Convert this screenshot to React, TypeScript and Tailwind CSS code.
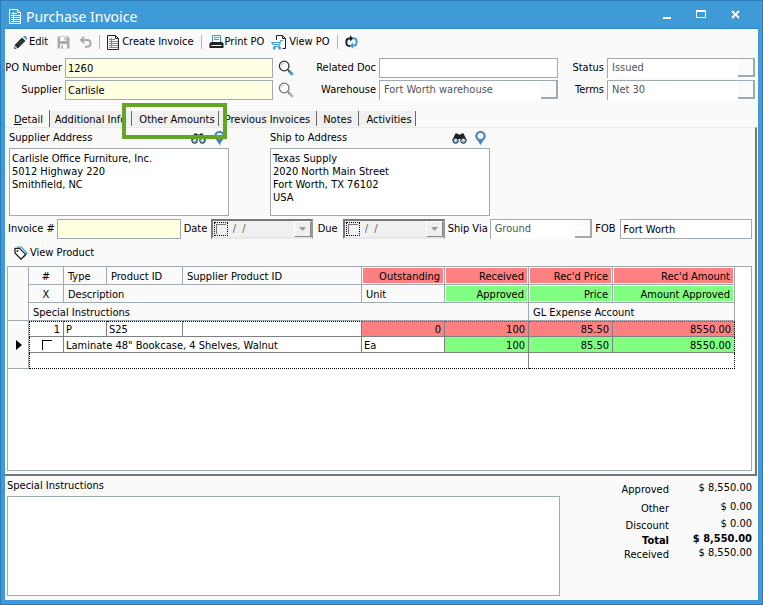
import React, { useState } from 'react';

const tabs = [
  { name: 'Detail', width: 'w-[44px] pl-0.5' },
  { name: 'Additional Info', width: 'w-[82px]' },
  { name: 'Other Amounts', width: 'w-[87px] pl-1' },
  { name: 'Previous Invoices', width: 'w-[98px]' },
  { name: 'Notes', width: 'w-[42px]' },
  { name: 'Activities', width: 'w-[57px] pl-1' },
];

const totals = [
  { label: 'Approved', value: '$ 8,550.00', row: 'h-5' },
  { label: 'Other', value: '$ 0.00', row: 'h-[18px]' },
  { label: 'Discount', value: '$ 0.00', row: 'h-4' },
  { label: 'Total', value: '$ 8,550.00', row: 'h-[14px] font-bold' },
  { label: 'Received', value: '$ 8,550.00', row: 'h-[14px]' },
];

const ListIcon = ({ paper, ink }: { paper: string; ink: string }) => (
  <svg width="13" height="15" viewBox="0 0 13 15" fill="none" aria-hidden="true">
    <path d="M2 4.5h6M2 6.5h9M2 8.5h9M2 10.5h9M2 12.5h9M4.5 3v10" stroke={ink} />
    <path d="M.5.5h8l3 3v11H.5z" stroke={paper} />
    <path d="M8.5.5v3h3" stroke={paper} />
  </svg>
);

const PencilIcon = () => (
  <svg width="15" height="15" viewBox="0 0 15 15" aria-hidden="true">
    <path d="M1 14l1.2-4.6L9 2.6 12.4 6l-6.8 6.8z" fill="#222" />
    <path d="M2.6 10.8l1.6 1.6L2 13z" fill="#fff" />
    <path d="M4.5 9.6l5-5M6 11l5-5" stroke="#777" strokeWidth=".6" />
    <path d="M10 1.6c1-1 2-1 3 0l.6.6c.8.9.8 1.8-.2 2.8z" fill="#3f9bd7" />
    <path d="M11 3.2l1 1" stroke="#fff" />
  </svg>
);

const SaveIcon = () => (
  <svg width="13" height="13" viewBox="0 0 13 13" aria-hidden="true">
    <path d="M.5.5h10.6l1.4 1.4v10.6H.5z" fill="#aaa" />
    <path d="M3 1h6.5v4H3zM3 8h7v4.5H3z" fill="#fbfbfb" />
    <path d="M7.4 1.4h1.2v2.8H7.4zM4.4 9.2h1.6v3.3H4.4z" fill="#aaa" />
  </svg>
);

const UndoIcon = () => (
  <svg width="13" height="12" viewBox="0 0 13 12" fill="none" stroke="#aaa" aria-hidden="true">
    <path d="M2 4h6c2.6 0 3.6 1.4 3.6 3.3S10.3 10.8 7.6 10.8H6" strokeWidth="2" />
    <path d="M5.2.8L1.8 4l3.4 3.2" strokeWidth="1.8" />
  </svg>
);

const PrinterIcon = () => (
  <svg width="15" height="14" viewBox="0 0 15 14" aria-hidden="true">
    <path d="M3.5 7V.5h8V7" fill="#fff" stroke="#3f9bd7" />
    <path d="M5 2.5h5M5 4.5h5" stroke="#3f9bd7" />
    <path d="M2 7h11l1.5 1.5V13H.5V8.5z" fill="#222" />
    <path d="M2.5 10.5h10" stroke="#fff" />
  </svg>
);

const CartIcon = () => (
  <svg width="16" height="15" viewBox="0 0 16 15" fill="none" aria-hidden="true">
    <path d="M5.5 5V.5h6l3 3v10h-3" stroke="#222" />
    <path d="M11.5.5v3h3" stroke="#222" />
    <path d="M12 5.5H9.5l-1 6H3M.5 7.5h8.5M1.5 9.5h7" stroke="#3f9bd7" />
    <path d="M.5 7.5l2 2.5" stroke="#3f9bd7" />
    <path d="M2 12h2.4v2.4H2zM7.4 12h2.4v2.4H7.4z" fill="#3f9bd7" />
  </svg>
);

const RefreshIcon = () => (
  <svg width="13" height="14" viewBox="0 0 13 14" fill="none" aria-hidden="true">
    <path d="M5.2 11H4.4C2.4 11 1.4 9.8 1.4 8V6.6C1.4 4.6 2.4 3.4 4.4 3.4h.8" stroke="#222" strokeWidth="2" />
    <path d="M5 .2v6.4l3.4-3.2z" fill="#222" />
    <path d="M7.8 3.2h.8c2 0 3 1.200 3 3v1.200c0 2-1 3.200-3 3.200h-.8" stroke="#3f9bd7" strokeWidth="2" />
    <path d="M8 7.4v6.400l-3.400-3.200z" fill="#3f9bd7" />
  </svg>
);

const SearchIcon = ({ handle, ring }: { handle: string; ring: string }) => (
  <svg width="16" height="16" viewBox="0 0 16 16" fill="none" aria-hidden="true">
    <circle cx="6.2" cy="6" r="4.8" fill="#fff" stroke={ring} strokeWidth="1.3" />
    <path d="M3.6 5.6a2.6 2.6 0 012.2-2.2" stroke="#aaa" strokeWidth=".8" />
    <path d="M10 10l1.6 1.6" stroke={ring} strokeWidth="1.8" />
    <path d="M11.2 11.2l3.6 3.6" stroke={handle} strokeWidth="2.8" />
  </svg>
);

const BinocularsIcon = () => (
  <svg width="15" height="11" viewBox="0 0 15 11" aria-hidden="true">
    <path d="M3.4.4h2.4l.6 1h2.2l.6-1h2.4L14.6 7 13 10H9V6H6v4H2L.4 7z" fill="#222" />
    <circle cx="3.6" cy="7.6" r="2.7" fill="#8cc4ea" stroke="#222" />
    <circle cx="11.4" cy="7.6" r="2.7" fill="#8cc4ea" stroke="#222" />
    <path d="M2.4 8.2l2-2M10.2 8.2l2-2" stroke="#fff" />
  </svg>
);

const PinIcon = () => (
  <svg width="11" height="14" viewBox="0 0 11 14" aria-hidden="true">
    <path
      d="M5.5 0C2.4 0 .3 2.2.3 5c0 2 1 3.4 2.4 4.4L5.5 14l2.8-4.6C9.7 8.4 10.7 7 10.7 5c0-2.8-2.1-5-5.2-5z"
      fill="#4484c4"
    />
    <circle cx="5.5" cy="5" r="3" fill="#fff" />
  </svg>
);

const TagIcon = () => (
  <svg width="14" height="14" viewBox="0 0 14 14" fill="none" aria-hidden="true">
    <path d="M3 1h4.4L13 7.2l-4 4.4" stroke="#3f9bd7" strokeWidth="1.2" />
    <path d="M1 2.4h4.6l6 6L7 13.2 1 7z" fill="#fff" stroke="#222" strokeWidth="1.3" />
    <circle cx="3.4" cy="5" r="1" fill="#222" />
  </svg>
);

const Separator = () => <span className="h-[14px] w-px bg-[#b4b4b4]" />;

const DropDown = ({ id, value }: { id: string; value: string }) => (
  <div className="relative h-5 min-w-0 border-t border-l border-[#a0a8b0] bg-white">
    <select
      id={id}
      disabled
      defaultValue={value}
      className="block h-[17px] w-full appearance-none bg-transparent px-1 text-[#555] opacity-100"
    >
      <option>{value}</option>
    </select>
    <span className="pointer-events-none absolute top-0 right-0 flex h-[18px] w-[17px] items-center justify-center border-r-2 border-b-2 border-[#a0a8b0] bg-[#fafafa]">
      <svg width="7" height="4" viewBox="0 0 7 4" aria-hidden="true">
        <path d="M0 0h7L3.5 4z" fill="#fff" />
      </svg>
    </span>
  </div>
);

const DateBox = ({ id, label }: { id: string; label: string }) => (
  <div className="flex h-5 w-[102px] items-center border-2 border-t-[#777] border-r-[#999] border-b-[#e8e8e8] border-l-[#777] bg-[#f0f0f0] pl-px">
    <span className="flex size-[14px] items-center justify-center border border-dotted border-black">
      <input
        type="checkbox"
        aria-label={`Set ${label}`}
        className="size-[10px] appearance-none border-t border-l border-[#777]"
      />
    </span>
    <input
      id={id}
      type="text"
      defaultValue="/  /"
      className="min-w-0 flex-1 bg-transparent pl-[5px] whitespace-pre text-[#606060] outline-none"
    />
    <button
      type="button"
      aria-label={`Pick ${label}`}
      className="flex h-4 w-[17px] items-center justify-center border border-t-white border-r-[#888] border-b-[#888] border-l-white"
    >
      <svg width="7" height="4" viewBox="0 0 7 4" aria-hidden="true">
        <path d="M0 0h7L3.5 4z" fill="#999" />
      </svg>
    </button>
  </div>
);

const AddressBox = ({ id, label, value }: { id: string; label: string; value: string }) => (
  <div className="w-[220px]">
    <div className="flex h-5 items-center">
      <label htmlFor={id} className="flex-1">{label}</label>
      <button type="button" aria-label={`Find ${label}`} className="mr-2">
        <BinocularsIcon />
      </button>
      <button type="button" aria-label={`Map ${label}`} className="mr-1">
        <PinIcon />
      </button>
    </div>
    <textarea
      id={id}
      defaultValue={value}
      className="block h-[68px] w-full resize-none border border-[#a0a8b0] bg-white px-0.5 pt-[3px] leading-[13px] outline-none"
    />
  </div>
);

const headCell = 'h-[18px] border-r border-b border-[#a0a8b0] p-0 font-normal';
const headText = `${headCell} pt-0.5 pl-1`;
const bodyCell = 'h-4 border-r border-b border-[#808080] p-0 pt-px leading-[13px]';

const HeadFill = ({ color, children }: { color: string; children: React.ReactNode }) => (
  <div className={`mx-px h-[15px] pr-[3px] text-right leading-[17px] ${color}`}>{children}</div>
);

const ProductTable = () => (
  <table className="w-[727px] table-fixed border-separate border-spacing-0 text-left">
    <colgroup>
      <col className="w-[21px]" />
      <col className="w-[35px]" />
      <col className="w-[43px]" />
      <col className="w-[76px]" />
      <col className="w-[179px]" />
      <col className="w-[83px]" />
      <col className="w-[84px]" />
      <col className="w-[84px]" />
      <col className="w-[122px]" />
    </colgroup>
    <thead className="bg-[#fafafa]">
      <tr>
        <td rowSpan={3} className={headCell}></td>
        <th className={`${headCell} pt-0.5 text-center`}>#</th>
        <th className={headText}>Type</th>
        <th className={headText}>Product ID</th>
        <th className={headText}>Supplier Product ID</th>
        <th className={headCell}><HeadFill color="bg-[#ff8080]">Outstanding</HeadFill></th>
        <th className={headCell}><HeadFill color="bg-[#ff8080]">Received</HeadFill></th>
        <th className={headCell}><HeadFill color="bg-[#ff8080]">Rec'd Price</HeadFill></th>
        <th className={headCell}><HeadFill color="bg-[#ff8080]">Rec'd Amount</HeadFill></th>
      </tr>
      <tr>
        <th className={`${headCell} pt-0.5 text-center`}>X</th>
        <th colSpan={3} className={headText}>Description</th>
        <th className={headText}>Unit</th>
        <th className={headCell}><HeadFill color="bg-[#80ff80]">Approved</HeadFill></th>
        <th className={headCell}><HeadFill color="bg-[#80ff80]">Price</HeadFill></th>
        <th className={headCell}><HeadFill color="bg-[#80ff80]">Amount Approved</HeadFill></th>
      </tr>
      <tr>
        <th colSpan={6} className={headText}>Special Instructions</th>
        <th colSpan={2} className={headText}>GL Expense Account</th>
      </tr>
    </thead>
    <tbody className="bg-white">
      <tr>
        <td rowSpan={3} className="border-r border-b border-[#a0a8b0] bg-[#fafafa] p-0">
          <svg width="6" height="10" viewBox="0 0 6 10" className="ml-2" aria-hidden="true">
            <path d="M0 0l6 5-6 5z" fill="#000" />
          </svg>
        </td>
        <td className={`${bodyCell} border-t border-t-black border-l border-l-black pr-[3px] text-right [border-top-style:dotted] [border-left-style:dotted]`}>1</td>
        <td className={`${bodyCell} border-t border-t-black pl-0.5 [border-top-style:dotted]`}>P</td>
        <td className={`${bodyCell} border-t border-t-black pl-0.5 [border-top-style:dotted]`}>S25</td>
        <td className={`${bodyCell} border-t border-t-black [border-top-style:dotted]`}></td>
        <td className={`${bodyCell} border-t border-t-[#007f7f] bg-[#ff8080] pr-[3px] text-right [border-top-style:dotted]`}>0</td>
        <td className={`${bodyCell} border-t border-t-[#007f7f] bg-[#ff8080] pr-[3px] text-right [border-top-style:dotted]`}>100</td>
        <td className={`${bodyCell} border-t border-t-[#007f7f] bg-[#ff8080] pr-[3px] text-right [border-top-style:dotted]`}>85.50</td>
        <td className={`${bodyCell} border-t border-t-[#007f7f] border-r-black bg-[#ff8080] pr-[3px] text-right [border-top-style:dotted] [border-right-style:dotted]`}>8550.00</td>
      </tr>
      <tr>
        <td className={`${bodyCell} border-l border-l-black [border-left-style:dotted]`}>
          <input
            type="checkbox"
            aria-label="Close line"
            className="mx-auto block size-[10px] appearance-none border-t border-l border-black"
          />
        </td>
        <td colSpan={3} className={`${bodyCell} pl-0.5`}>Laminate 48" Bookcase, 4 Shelves, Walnut</td>
        <td className={`${bodyCell} pl-0.5`}>Ea</td>
        <td className={`${bodyCell} bg-[#80ff80] pr-[3px] text-right`}>100</td>
        <td className={`${bodyCell} bg-[#80ff80] pr-[3px] text-right`}>85.50</td>
        <td className={`${bodyCell} border-r-black bg-[#80ff80] pr-[3px] text-right [border-right-style:dotted]`}>8550.00</td>
      </tr>
      <tr>
        <td colSpan={6} className={`${bodyCell} border-b-black border-l border-l-black [border-bottom-style:dotted] [border-left-style:dotted]`}></td>
        <td colSpan={2} className={`${bodyCell} border-r-black border-b-black [border-right-style:dotted] [border-bottom-style:dotted]`}></td>
      </tr>
    </tbody>
  </table>
);

const App: React.FC = () => {
  const [activeTab, setActiveTab] = useState('Detail');

  return (
    <div className="flex min-h-screen flex-col border border-[#2b7cb8] bg-[#3f9bd7] px-1 pb-1 font-['DejaVu_Sans_Condensed','Noto_Sans',sans-serif] text-[11px] leading-[14px] text-black">
      {/* Title Bar */}
      <header className="flex h-7 items-center border-b border-[#2f87c4] pt-1 pr-[18px] pl-1 text-white">
        <ListIcon paper="#fff" ink="#fff" />
        <h1 className="ml-1 flex-1 font-['Noto_Sans',sans-serif] text-[14px] leading-5">Purchase Invoice</h1>
        <div className="flex gap-[25px] pb-1">
          <button type="button" aria-label="Minimize" className="flex w-2 items-end">
            <span className="h-0.5 w-2 bg-white" />
          </button>
          <button type="button" aria-label="Maximize" className="h-2 w-[10px] border border-t-2 border-white" />
          <button type="button" aria-label="Close">
            <svg width="9" height="9" viewBox="0 0 9 9" aria-hidden="true">
              <path d="M1 1l7 7M8 1L1 8" stroke="#fff" strokeWidth="1.8" />
            </svg>
          </button>
        </div>
      </header>

      <main className="flex flex-1 flex-col bg-[#fafafa]">
        {/* Toolbar */}
        <div className="flex h-[26px] items-center gap-[7px] pl-2">
          <button type="button" className="flex items-center gap-px"><PencilIcon />Edit</button>
          <button type="button" aria-label="Save" disabled className="pl-0.5"><SaveIcon /></button>
          <button type="button" aria-label="Undo" disabled className="pl-0.5"><UndoIcon /></button>
          <Separator />
          <button type="button" className="flex items-center gap-0.5"><ListIcon paper="#222" ink="#3f9bd7" />Create Invoice</button>
          <Separator />
          <button type="button" className="flex items-center gap-px"><PrinterIcon />Print PO</button>
          <button type="button" className="flex items-center gap-0.5"><CartIcon />View PO</button>
          <Separator />
          <button type="button" aria-label="Refresh"><RefreshIcon /></button>
        </div>

        {/* Order Fields */}
        <div className="grid grid-cols-[54px_minmax(0,208fr)_21px_76px_minmax(0,179fr)_43px_minmax(0,148fr)] items-center gap-x-[3px] gap-y-0.5 px-[3px] pt-[3px]">
          <label htmlFor="po" className="flex justify-end whitespace-nowrap">PO Number</label>
          <input id="po" defaultValue="1260" className="h-5 border border-[#a0a8b0] bg-[#ffffe1] px-0.5 outline-none" />
          <button type="button" aria-label="Find PO" className="pl-0.5"><SearchIcon ring="#333" handle="#3f9bd7" /></button>
          <label htmlFor="related" className="text-right">Related Doc</label>
          <input id="related" className="h-5 border border-[#a0a8b0] bg-white px-0.5 outline-none" />
          <label htmlFor="status" className="text-right">Status</label>
          <DropDown id="status" value="Issued" />

          <label htmlFor="supplier" className="text-right">Supplier</label>
          <input id="supplier" defaultValue="Carlisle" className="h-5 border border-[#a0a8b0] bg-[#ffffe1] px-0.5 outline-none" />
          <button type="button" aria-label="Find supplier" className="pl-0.5"><SearchIcon ring="#777" handle="#b4b4b4" /></button>
          <label htmlFor="warehouse" className="text-right">Warehouse</label>
          <DropDown id="warehouse" value="Fort Worth warehouse" />
          <label htmlFor="terms" className="text-right">Terms</label>
          <DropDown id="terms" value="Net 30" />
        </div>

        {/* Tabs */}
        <div role="tablist" className="mt-[10px] flex h-[17px] pl-px">
          {tabs.map(tab => (
            <button
              key={tab.name}
              type="button"
              role="tab"
              aria-selected={activeTab === tab.name}
              onClick={() => setActiveTab(tab.name)}
              className={`relative border-r border-[#696969] pt-0.5 text-center whitespace-nowrap ${tab.width} ${
                activeTab === tab.name ? 'bg-[#fafafa]' : 'mt-px h-[15px] bg-[#f0f0f0]'
              }`}
            >
              {tab.name === 'Detail' ? <><span className="underline">D</span>etail</> : tab.name}
              {tab.name === 'Other Amounts' && (
                <span className="pointer-events-none absolute -top-2 -right-[9px] -bottom-[13px] -left-[10px] z-10 border-4 border-[#62a527]" />
              )}
            </button>
          ))}
        </div>

        {/* Detail Panel */}
        <section className="mr-px flex flex-1 flex-col border-t border-r-2 border-b-2 border-t-[#e8e8e8] border-r-[#777] border-b-[#777] pr-[3px] pb-[3px] pl-0.5">
          <div className="flex gap-[41px] pl-0.5">
            <AddressBox
              id="supplier-address"
              label="Supplier Address"
              value={'Carlisle Office Furniture, Inc.\n5012 Highway 220\nSmithfield, NC'}
            />
            <AddressBox
              id="ship-address"
              label="Ship to Address"
              value={'Texas Supply\n2020 North Main Street\nFort Worth, TX 76102\nUSA'}
            />
          </div>

          <div className="mt-[3px] grid grid-cols-[46px_minmax(0,124fr)_24px_102px_24px_102px_39px_minmax(0,103fr)_22px_minmax(0,132fr)] items-center gap-x-[3px] pl-px">
            <label htmlFor="invoice" className="whitespace-nowrap">Invoice #</label>
            <input id="invoice" className="h-5 border border-[#a0a8b0] bg-[#ffffe1] px-0.5 outline-none" />
            <label htmlFor="date">Date</label>
            <DateBox id="date" label="date" />
            <label htmlFor="due" className="text-center">Due</label>
            <DateBox id="due" label="due date" />
            <label htmlFor="ship-via" className="whitespace-nowrap">Ship Via</label>
            <DropDown id="ship-via" value="Ground" />
            <label htmlFor="fob">FOB</label>
            <input id="fob" defaultValue="Fort Worth" className="h-5 border border-[#a0a8b0] bg-white px-0.5 outline-none" />
          </div>

          <div className="flex h-[27px] items-center pl-[7px]">
            <button type="button" className="flex items-center gap-0.5"><TagIcon />View Product</button>
          </div>

          <div className="flex-1 border border-[#a0a8b0] bg-white">
            <ProductTable />
          </div>
        </section>

        {/* Footer */}
        <footer className="flex pr-1.5 pb-1 pl-0.5">
          <div className="flex-1">
            <label htmlFor="special" className="flex h-5 items-center">Special Instructions</label>
            <textarea id="special" className="block h-[100px] w-full resize-none border border-[#a0a8b0] bg-white px-0.5 outline-none" />
          </div>
          <dl className="w-[192px] pt-1">
            {totals.map(total => (
              <div key={total.label} className={`flex items-center ${total.row}`}>
                <dt className="w-[109px] text-right">{total.label}</dt>
                <dd className="flex-1 pb-1 text-right">{total.value}</dd>
              </div>
            ))}
          </dl>
        </footer>
      </main>
    </div>
  );
};

export default App;
